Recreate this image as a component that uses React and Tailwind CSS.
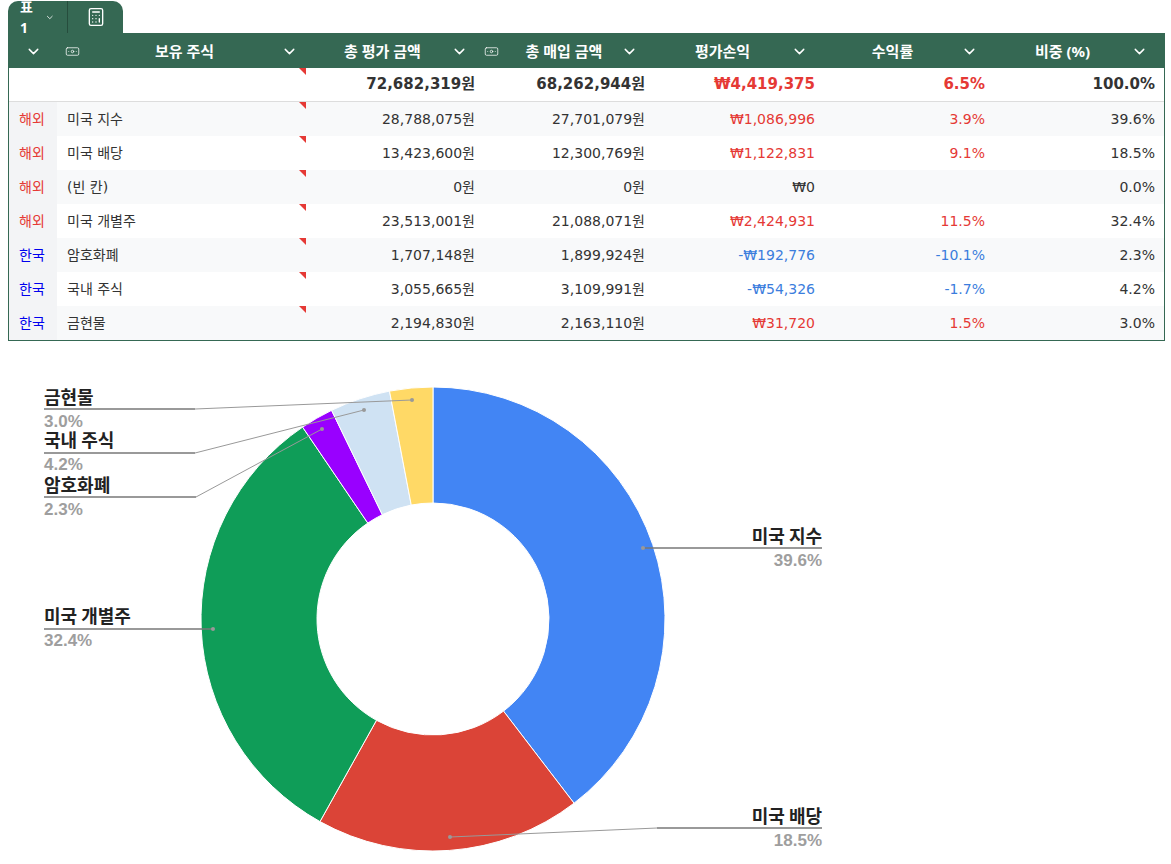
import { ChevronDown, Banknote, Calculator } from "lucide-react";

const rows = [
  { r: "해외", n: "미국 지수", t: "28,788,075원", p: "27,701,079원", pl: "₩1,086,996", rt: "3.9%", w: "39.6%", c: "red" },
  { r: "해외", n: "미국 배당", t: "13,423,600원", p: "12,300,769원", pl: "₩1,122,831", rt: "9.1%", w: "18.5%", c: "red" },
  { r: "해외", n: "(빈 칸)", t: "0원", p: "0원", pl: "₩0", rt: "", w: "0.0%", c: "zero" },
  { r: "해외", n: "미국 개별주", t: "23,513,001원", p: "21,088,071원", pl: "₩2,424,931", rt: "11.5%", w: "32.4%", c: "red" },
  { r: "한국", n: "암호화폐", t: "1,707,148원", p: "1,899,924원", pl: "-₩192,776", rt: "-10.1%", w: "2.3%", c: "blue" },
  { r: "한국", n: "국내 주식", t: "3,055,665원", p: "3,109,991원", pl: "-₩54,326", rt: "-1.7%", w: "4.2%", c: "blue" },
  { r: "한국", n: "금현물", t: "2,194,830원", p: "2,163,110원", pl: "₩31,720", rt: "1.5%", w: "3.0%", c: "red" },
];

const slices = [
  [0.396, "#4285f4"],
  [0.185, "#db4437"],
  [0.324, "#0f9d58"],
  [0.023, "#9900ff"],
  [0.042, "#cfe2f3"],
  [0.03, "#ffd966"],
];

const cx = 433, cy = 618, R = 232, r0 = 116;

function arc(a0, a1) {
  const p = (a, rad) => [cx + rad * Math.sin(a), cy - rad * Math.cos(a)];
  const [x0, y0] = p(a0, R), [x1, y1] = p(a1, R), [x2, y2] = p(a1, r0), [x3, y3] = p(a0, r0);
  const lg = a1 - a0 > Math.PI ? 1 : 0;
  return `M${x0} ${y0}A${R} ${R} 0 ${lg} 1 ${x1} ${y1}L${x2} ${y2}A${r0} ${r0} 0 ${lg} 0 ${x3} ${y3}Z`;
}

const labels = [
  { name: "금현물", pct: "3.0%", x: 44, y: 396, line: "M44 408 L195 408 L412 399", dot: [412, 399] },
  { name: "국내 주식", pct: "4.2%", x: 44, y: 439, line: "M44 452 L195 452 L364 409", dot: [364, 409] },
  { name: "암호화폐", pct: "2.3%", x: 44, y: 484, line: "M44 496 L196 496 L322 428", dot: [322, 428] },
  { name: "미국 개별주", pct: "32.4%", x: 44, y: 615, line: "M44 628 L213 628", dot: [213, 628] },
  { name: "미국 지수", pct: "39.6%", x: 822, y: 535, anchor: "end", line: "M643 547 L822 547", dot: [643, 547] },
  { name: "미국 배당", pct: "18.5%", x: 822, y: 815, anchor: "end", line: "M822 827 L657 827 L450 836", dot: [450, 836] },
];

const plColor = { red: "text-[#e53935]", blue: "text-[#3b7ddd]", zero: "text-[#333]" };
const cols = "grid grid-cols-[48px_249px_170px_170px_170px_170px_170px_8px]";

function Head({ label, icon }) {
  return (
    <div className="flex items-center h-full px-2">
      {icon && <Banknote size={15} className="mr-2 text-white/80" strokeWidth={1.5} />}
      <span className="flex-1 text-center font-bold">{label}</span>
      <ChevronDown size={17} />
    </div>
  );
}

export default function App() {
  let acc = 0;
  return (
    <div className="bg-white w-[1171px] h-[864px] overflow-hidden text-[14px] text-[#333]" style={{ fontFamily: '"Noto Sans", "Noto Sans CJK KR", sans-serif' }}>
      <div className="flex ml-[8px] pt-[1px]">
        <div className="flex h-[32px] w-[115px] bg-[#356853] text-white rounded-t-[10px] items-center text-[14px]">
          <div className="flex items-center gap-3 px-3 h-full border-r border-[#264d3d] font-bold w-[60px]">표1 <ChevronDown size={15} /></div>
          <div className="flex-1 flex justify-center"><Calculator size={20} strokeWidth={1.6} /></div>
        </div>
      </div>
      <div className="mx-[8px] border border-[#356853] w-[1157px]">
        <div className={`${cols} h-[34px] bg-[#356853] text-white text-[15px]`}>
          <div className="flex items-center justify-center"><ChevronDown size={17} /></div>
          <div className="flex items-center h-full pr-2 pl-2">
            <Banknote size={15} className="mr-2 text-white/80" strokeWidth={1.5} />
            <span className="flex-1 text-center font-bold">보유 주식</span>
            <ChevronDown size={17} />
          </div>
          <Head label="총 평가 금액" />
          <Head label="총 매입 금액" icon />
          <Head label="평가손익" />
          <Head label="수익률" />
          <Head label="비중 (%)" />
          <div />
        </div>
        <div className={`${cols} h-[34px] items-center font-bold text-[15px] border-b border-[#ddd]`} style={{ fontFamily: '"DejaVu Sans", "Noto Sans CJK KR", sans-serif' }}>
          <div />
          <div className="relative h-full"><Tri /></div>
          <div className="text-right pr-[1px]">72,682,319원</div>
          <div className="text-right pr-[1px]">68,262,944원</div>
          <div className="text-right pr-[1px] text-[#e53935]">₩4,419,375</div>
          <div className="text-right pr-[1px] text-[#e53935]">6.5%</div>
          <div className="text-right pr-[1px]">100.0%</div>
          <div />
        </div>
        {rows.map((x, i) => (
          <div key={i} className={`${cols} h-[34px] items-center ${i % 2 === 0 ? "bg-[#f8f9fa]" : "bg-white"}`} style={{ fontFamily: '"DejaVu Sans", "Noto Sans CJK KR", sans-serif', fontSize: 14 }}>
            <div className={`bg-[#f3f4f6] h-full flex items-center pl-[10px] ${x.r === "해외" ? "text-[#e53935]" : "text-[#0000ee]"}`}>{x.r}</div>
            <div className="relative h-full flex items-center pl-[10px]">{x.n}<Tri /></div>
            <div className="text-right pr-[1px]">{x.t}</div>
            <div className="text-right pr-[1px]">{x.p}</div>
            <div className={`text-right pr-[1px] ${plColor[x.c]}`}>{x.pl}</div>
            <div className={`text-right pr-[1px] ${plColor[x.c]}`}>{x.rt}</div>
            <div className="text-right pr-[1px]">{x.w}</div>
            <div />
          </div>
        ))}
      </div>
      <svg width="1171" height="524" viewBox="0 340 1171 524" className="block">
        {slices.map(([f, col], i) => {
          const a0 = acc * 2 * Math.PI;
          acc += f;
          const a1 = acc * 2 * Math.PI;
          return <path key={i} d={arc(a0, a1)} fill={col} stroke="#fff" strokeWidth="1" />;
        })}
        {labels.map((l, i) => (
          <g key={i}>
            <path d={l.line} stroke="#999" strokeWidth="1" fill="none" />
            <path d={l.line.split(" L").slice(0, 2).join(" L")} stroke="#666" strokeWidth="1" fill="none" />
            <circle cx={l.dot[0]} cy={l.dot[1]} r="2" fill="#999" />
            <text x={l.x} y={l.y + 7} textAnchor={l.anchor || "start"} fontSize="18" fontWeight="bold" fill="#222" fontFamily='"Noto Sans CJK KR", sans-serif'>{l.name}</text>
            <text x={l.x} y={l.y + 30} textAnchor={l.anchor || "start"} fontSize="17" fontWeight="bold" fill="#9e9e9e" fontFamily='"Liberation Sans", sans-serif'>{l.pct}</text>
          </g>
        ))}
      </svg>
    </div>
  );
}

function Tri() {
  return <div className="absolute top-0 right-0 w-0 h-0 border-t-[7px] border-l-[7px] border-t-[#e53935] border-l-transparent" />;
}
